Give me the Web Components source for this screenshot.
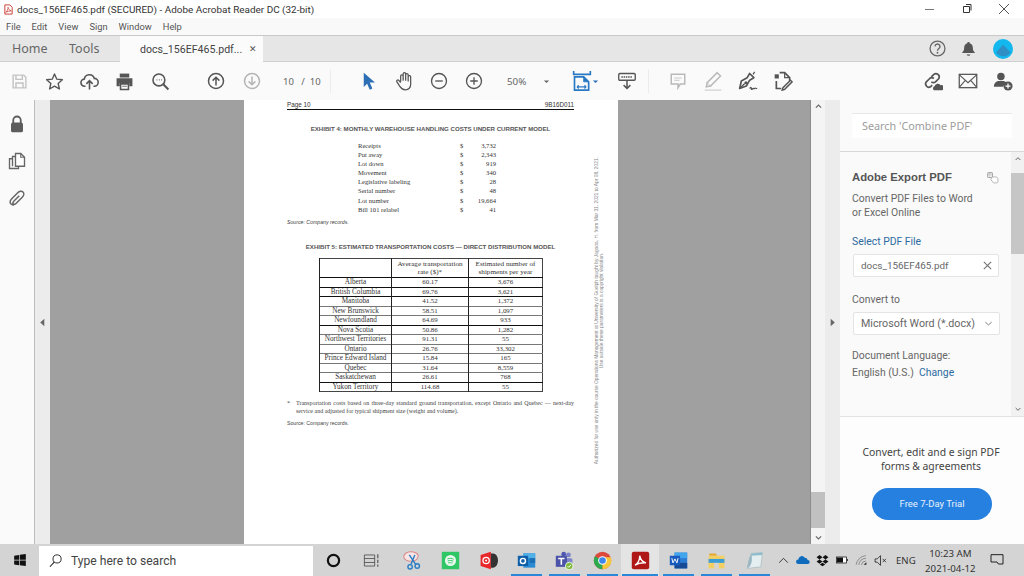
<!DOCTYPE html>
<html>
<head>
<meta charset="utf-8">
<title>docs_156EF465.pdf</title>
<style>
  html, body { margin: 0; height: 100%; overflow: hidden; background: #fff; }
  body { font-family: "Open Sans", "Noto Sans", sans-serif; }
  #app { display: flex; flex-direction: column; width: 1024px; height: 576px; }
  #main { display: flex; height: 444px; }
</style>
</head>
<body>
<div id="app">
  <title-bar></title-bar>
  <menu-bar></menu-bar>
  <tab-bar></tab-bar>
  <tool-bar></tool-bar>
  <div id="main">
    <left-rail></left-rail>
    <pdf-view></pdf-view>
    <tools-panel></tools-panel>
  </div>
  <task-bar></task-bar>
</div>

<script>
const ICONS = {
  pdfdoc: '<path d="M4 2h11l5 5v15H4z" fill="#fff" stroke="#c8352b" stroke-width="2"/><path d="M6 18c3-2 5-6 5-11 1 4 3 7 7 8-4 0-8 1-12 3z" fill="none" stroke="#c8352b" stroke-width="1.6"/>',
  save: '<path d="M3 3h15l3 3v15H3z" fill="none" stroke="#c4c4c4" stroke-width="2"/><path d="M7 3v6h9V3M7 21v-7h10v7" fill="none" stroke="#c4c4c4" stroke-width="2"/>',
  star: '<path d="M12 2.500l2.900 6.600 7.100.7-5.400 4.700 1.600 7L12 17.800l-6.200 3.700 1.600-7L2 9.800l7.100-.7z" fill="none" stroke="#555" stroke-width="1.700" stroke-linejoin="round"/>',
  cloud: '<path d="M7 18H6a4.500 4.500 0 0 1-.6-9A6.500 6.500 0 0 1 18 8a5 5 0 0 1 0 10h-1" fill="none" stroke="#555" stroke-width="2"/><path d="M12 22V11M8 15l4-4 4 4" fill="none" stroke="#555" stroke-width="2"/>',
  print: '<path d="M6 2h12v5H6z" fill="#555"/><path d="M2 8h20v10h-4v-4H6v4H2z" fill="#555"/><path d="M7 15h10v7H7z" fill="none" stroke="#555" stroke-width="2"/><path d="M9 18h6" stroke="#555"/>',
  find: '<circle cx="10" cy="10" r="7.500" fill="none" stroke="#555" stroke-width="2"/><path d="M15.500 15.500L22 22" stroke="#555" stroke-width="2.600"/><path d="M7 10h1M10 10h1M13 10h1" stroke="#555" stroke-width="1.400"/>',
  up: '<circle cx="12" cy="12" r="10" fill="none" stroke="#555" stroke-width="2"/><path d="M12 18V7M7.500 11.500L12 7l4.500 4.500" fill="none" stroke="#555" stroke-width="2"/>',
  down: '<circle cx="12" cy="12" r="10" fill="none" stroke="#b4b4b4" stroke-width="2"/><path d="M12 6v11M7.500 12.500L12 17l4.500-4.500" fill="none" stroke="#b4b4b4" stroke-width="2"/>',
  cursor: '<path d="M5 1l15 13h-7l3.500 8-3.500 1.500-3.500-8L5 20z" fill="#2d6fb5"/>',
  hand: '<path d="M8 13V6a1.500 1.500 0 0 1 3 0v5V3.500a1.500 1.500 0 0 1 3 0V11V4.500a1.500 1.500 0 0 1 3 0V12V7a1.500 1.500 0 0 1 3 0v9c0 4-2.500 6.500-6.500 6.500-3.500 0-5-1.500-6.500-4L3.500 13c-1-1.500 1-3 2.300-1.700L8 14" fill="none" stroke="#555" stroke-width="1.500" stroke-linejoin="round"/>',
  minus: '<circle cx="12" cy="12" r="10" fill="none" stroke="#555" stroke-width="1.800"/><path d="M7 12h10" stroke="#555" stroke-width="1.800"/>',
  plus: '<circle cx="12" cy="12" r="10" fill="none" stroke="#555" stroke-width="1.800"/><path d="M7 12h10M12 7v10" stroke="#555" stroke-width="1.800"/>',
  fit: '<path d="M2 0v4h20V0" fill="none" stroke="#2878c4" stroke-width="2"/><path d="M3 7h11l6 6v10H3z" fill="none" stroke="#2878c4" stroke-width="2"/><path d="M14 7v6h6z" fill="#2878c4" stroke="#2878c4"/><path d="M6 19h11M6 19l2-2M6 19l2 2M17 19l-2-2M17 19l-2 2" stroke="#2878c4" stroke-width="1.300"/>',
  keys: '<rect x="1" y="2" width="22" height="9" rx="1.500" fill="none" stroke="#555" stroke-width="1.800"/><path d="M4.500 6.500h15" stroke="#555" stroke-width="2" stroke-dasharray="2 1"/><path d="M12 11v11M7.500 17.500L12 22l4.500-4.500" fill="none" stroke="#555" stroke-width="2"/>',
  comment: '<path d="M3 3h18v13h-6l-3 5v-5H3z" fill="none" stroke="#b9b9b9" stroke-width="2"/><path d="M7 8h10M7 11h7" stroke="#c9c9c9" stroke-width="1.500"/>',
  marker: '<path d="M17 2l4 4L9 18l-5 1 1-5z" fill="none" stroke="#b9b9b9" stroke-width="1.800"/><path d="M2 23h20" stroke="#dcdcdc" stroke-width="2"/><path d="M5 14l5 5" stroke="#b9b9b9"/>',
  sign: '<path d="M2 21l2-9 7-4 3-5 5 5-5 3-4 7z" fill="none" stroke="#555" stroke-width="2" stroke-linejoin="round"/><circle cx="9.500" cy="14" r="1.800" fill="#555"/><path d="M2 21l6-6M20 1l-2 3" stroke="#555" stroke-width="1.500"/><path d="M14 21c1-2 2-2 2 0s1 1 2 0 1 1 2 0 1 0 3 0" fill="none" stroke="#555" stroke-width="1.500"/>',
  edit: '<path d="M2 4h5v5H2z" fill="#555"/><path d="M8 2h6l6 6v4" fill="none" stroke="#555" stroke-width="2"/><path d="M14 2v6h6" fill="none" stroke="#555" stroke-width="1.500"/><path d="M4 12v9h6" fill="none" stroke="#555" stroke-width="2"/><path d="M21 11l2 2-9 9-3 1 1-3z" fill="none" stroke="#555" stroke-width="1.700"/>',
  link: '<path d="M10 7l3-3a4 4 0 0 1 6 5l-4 4a4 4 0 0 1-5 0" fill="none" stroke="#555" stroke-width="2"/><path d="M13 9a4 4 0 0 0-5 0l-4 4a4 4 0 0 0 5 6l2-2" fill="none" stroke="#555" stroke-width="2"/><path d="M13 23a3 3 0 0 1 1-5 4 4 0 0 1 7-1 3 3 0 0 1 2 6z" fill="#555"/>',
  mail: '<rect x="1.500" y="4" width="21" height="16" fill="none" stroke="#555" stroke-width="1.500"/><path d="M2 5l10 9 10-9M2 19l7-8M22 19l-7-8" fill="none" stroke="#555" stroke-width="1.300"/>',
  adduser: '<circle cx="9.500" cy="6.500" r="4.500" fill="#555"/><path d="M1 19c0-4 2-6 5-7h7c2 .7 3 1.500 3.500 2.500A6 6 0 0 0 12 19z" fill="#555"/><circle cx="18" cy="18" r="5.500" fill="#555"/><path d="M15 18h6M18 15v6" stroke="#fff" stroke-width="1.500"/>',
  help: '<circle cx="12" cy="12" r="10.500" fill="none" stroke="#666" stroke-width="1.800"/><path d="M8.500 9a3.500 3.500 0 1 1 5.500 3c-1.500 1-2 1.500-2 3" fill="none" stroke="#666" stroke-width="2"/><circle cx="12" cy="18" r="1.300" fill="#666"/>',
  bell: '<path d="M12 1.500a2 2 0 0 1 2 2.200c3.500 1 5 4 5 8 0 3 1 5 3 6.300v1H2v-1c2-1.300 3-3.300 3-6.300 0-4 1.500-7 5-8a2 2 0 0 1 2-2.200z" fill="#555"/><path d="M9 21.500h6a3 2 0 0 1-6 0z" fill="#555"/>',
  avatar: '<circle cx="12" cy="12" r="12" fill="#12b7ee"/><path d="M4 16l8-9 3 3 6 6a10 10 0 0 1-17 0z" fill="#2f8fc4"/>',
  lock: '<path d="M7 11V7a5 5 0 0 1 10 0v4" fill="none" stroke="#5c5c5c" stroke-width="2.400"/><rect x="4" y="10" width="16" height="13" rx="2.500" fill="#5c5c5c"/>',
  copy: '<path d="M10 2h7l5 5v12H10z" fill="#fff" stroke="#666" stroke-width="1.800"/><path d="M17 2v5h5" fill="none" stroke="#666" stroke-width="1.500"/><path d="M10 6H6v13" fill="none" stroke="#666" stroke-width="1.800"/><path d="M6 9H2v13h12v-3" fill="none" stroke="#666" stroke-width="1.800"/>',
  clip: '<path d="M8 21c-3 1-6-2-5-5 .4-1 1-2 2-3l8-8c2-2 5-3 7-1s1 5-1 7l-8 8c-1 1-3 2-4 1s0-3 1-4l7-7" fill="none" stroke="#666" stroke-width="2"/>',
  exporthand: '<rect x="3" y="3" width="9" height="9" rx="2" fill="none" stroke="#aaa" stroke-width="2"/><path d="M3 7h9M7 3v9" stroke="#aaa"/><path d="M11 11h7c3 0 4 2 4 4v5c0 1-1 2-3 2h-5l-5-6z" fill="#fff" stroke="#aaa" stroke-width="1.600"/>',
  clear: '<path d="M4 4l16 16M20 4L4 20" stroke="#777" stroke-width="2.600"/>',
  chev: '<path d="M5 9l7 6 7-6" fill="none" stroke="#777" stroke-width="2"/>',
  chevup: '<path d="M5 15l7-7 7 7" fill="none" stroke="#666" stroke-width="3"/>',
  chevdown: '<path d="M5 9l7 7 7-7" fill="none" stroke="#666" stroke-width="3"/>',
  caret: '<path d="M5 9h14l-7 7z" fill="#666"/>',
  caretblue: '<path d="M5 9h14l-7 7z" fill="#2d6fb5"/>',
  left: '<path d="M16 4v16L7 12z" fill="#666"/>',
  right: '<path d="M8 4v16l9-8z" fill="#666"/>',
  win: '<path d="M2 4.500l8.500-1.200V11.500H2zM11.700 3.100L22 1.700V11.500H11.700zM2 12.700h8.500v8.100L2 19.600zM11.700 12.700H22v9.600l-10.300-1.400z" fill="#111"/>',
  lens: '<circle cx="14.500" cy="9.500" r="6.500" fill="none" stroke="#222" stroke-width="1.500"/><path d="M10 14.500L3 22" stroke="#222" stroke-width="1.700"/>',
  cortana: '<circle cx="12" cy="12" r="9" fill="none" stroke="#111" stroke-width="3.500"/>',
  taskview: '<path d="M3 5h13v14H3zM3 9.500h13M3 14.500h13" fill="none" stroke="#444" stroke-width="1"/><path d="M20 4v5M20 11v4M20 17v3" stroke="#444" stroke-width="1.300"/>',
  snip: '<path d="M1 7c0-4 5-6 9-6s10 2 9 6-5 6-9 6-9-2-9-6z" fill="#f7e4e4" stroke="#d98a8a" stroke-width="1.300"/><path d="M8 5l8 12M15 5L10 17" stroke="#2a7fc4" stroke-width="1.800"/><circle cx="9" cy="20" r="2.800" fill="none" stroke="#2a7fc4" stroke-width="1.800"/><circle cx="18" cy="19" r="2.800" fill="none" stroke="#2a7fc4" stroke-width="1.800"/>',
  spotify: '<rect x="1" y="1" width="22" height="22" fill="#2fc765"/><circle cx="12" cy="12" r="7" fill="#e8f8ee"/><path d="M8 10c3-1 6-1 8 .5M8.500 12.500c2.500-.7 5-.7 7 .4M9 15c2-.5 4-.4 5.500.4" fill="none" stroke="#2fc765" stroke-width="1.200"/>',
  redapp: '<path d="M2 5l13-4v22L2 19z" fill="#e8262a"/><path d="M15 3h3a6 9 0 0 1 0 18h-3z" fill="#333"/><circle cx="9" cy="12" r="4" fill="none" stroke="#fff" stroke-width="1.600"/><circle cx="9" cy="12" r="1.300" fill="#fff"/>',
  outlook: '<rect x="8" y="3" width="15" height="18" fill="#2a8ad4"/><path d="M8 3h15v6H8z" fill="#50b0e8"/><path d="M16 9h7v6h-7z" fill="#1b6fb5"/><rect x="1" y="6" width="13" height="13" fill="#0f5fa8"/><circle cx="7.500" cy="12.500" r="3.200" fill="none" stroke="#fff" stroke-width="1.800"/>',
  teams: '<circle cx="17" cy="5" r="3" fill="#7b83c9"/><rect x="13" y="9" width="9" height="10" rx="2" fill="#7b83c9"/><circle cx="11" cy="4" r="3" fill="#5059b0"/><rect x="1" y="6" width="14" height="14" fill="#4b53a8"/><path d="M4 9.500h8M8 9.500v8" stroke="#fff" stroke-width="2"/><circle cx="18" cy="19" r="4.800" fill="#7fba3c" stroke="#fff"/><path d="M15.800 19l1.600 1.600 2.800-3" fill="none" stroke="#fff" stroke-width="1.200"/>',
  chrome: '<circle cx="12" cy="12" r="11" fill="#dd4a3c"/><path d="M12 12L2.500 6.500A11 11 0 0 0 12 23z" fill="#2da94f"/><path d="M12 12v11A11 11 0 0 0 22.500 8H12z" fill="#f7c93a"/><circle cx="12" cy="12" r="5.500" fill="#fff"/><circle cx="12" cy="12" r="4.200" fill="#3f86ea"/>',
  acrobat: '<rect x="1" y="1" width="22" height="22" rx="2.500" fill="#b01818"/><path d="M5 18c4-2.500 6-7 6-12 1 5 3 8 8 9-5-.5-10 .5-14 3z" fill="none" stroke="#fff" stroke-width="1.700"/>',
  word: '<rect x="7" y="2" width="16" height="20" fill="#2b7cd3"/><path d="M7 2h16v7H7z" fill="#41a5ee"/><path d="M7 15h16v7H7z" fill="#174a94"/><rect x="1" y="6" width="13" height="12" fill="#185abd"/><path d="M3.500 9l1.500 6 2.500-5 2.500 5 1.500-6" fill="none" stroke="#fff" stroke-width="1.200"/>',
  folder: '<path d="M3 3h8l2 3H3z" fill="#e5a92c"/><path d="M2 6h20v16H2z" fill="#f4cf62"/><path d="M2 10h20v5H2z" fill="#3b9ed8"/><path d="M9 15h6v7H9z" fill="#d4d4d4"/>',
  notes: '<path d="M8 3l14-1-2 18-17 2z" fill="#e4edf0" stroke="#a2b6bb" stroke-width=".8"/><path d="M8 3l14-1-.5 3-13.500 1z" fill="#8fbccb"/><path d="M3 22c5-3 7-10 5-19-3 5-5 12-5 19z" fill="#9bb8c2"/>',
  trayup: '<path d="M4 16l8-8 8 8" fill="none" stroke="#222" stroke-width="1.600"/>',
  onedrive: '<path d="M4 19a4 4 0 0 1 0-8 6 6 0 0 1 11-3 5 5 0 0 1 5 4 3.500 3.500 0 0 1 0 7z" fill="#0f6cbd"/>',
  dropbox: '<path d="M6.500 2L12 6 6.500 10 1 6zM17.500 2L23 6l-5.500 4L12 6zM6.500 10L12 14l-5.500 4L1 14zM17.500 10L23 14l-5.500 4L12 14zM7 19.500l5-3.500 5 3.500-5 3z" fill="#111"/>',
  battery: '<rect x="1" y="6" width="20" height="12" fill="#fff" stroke="#111" stroke-width="1.500"/><rect x="2" y="7" width="12" height="10" fill="#111"/><path d="M22 10h1.500v4H22" fill="#111"/>',
  wifi: '<path d="M2 20A20 20 0 0 1 20 3M7 20A14 14 0 0 1 20 8M12 20a8 8 0 0 1 8-7" fill="none" stroke="#666" stroke-width="1.200"/><path d="M16 20l5-5v5z" fill="#222"/>',
  mute: '<path d="M2 9h4l6-6v18l-6-6H2z" fill="none" stroke="#222" stroke-width="1.500"/><path d="M16 9l6 6M22 9l-6 6" stroke="#222" stroke-width="1.500"/>',
  notify: '<path d="M3 4h18v14h-7l-2-3H3z" fill="none" stroke="#222" stroke-width="1.500"/>'
};

// small helper, every class below stamps its shadow root with this
function shadow(el, html) {
  el.attachShadow({ mode: 'open' }).innerHTML = html;
}

class UiIcon extends HTMLElement {
  connectedCallback() {
    const s = this.getAttribute('size') || 20;
    shadow(this, `
      <style>:host { display: inline-flex; flex: none; width: ${s}px; height: ${s}px; } svg { width: 100%; height: 100%; display: block; }</style>
      <svg viewBox="0 0 24 24">${ICONS[this.getAttribute('name')] || ''}</svg>`);
  }
}
customElements.define('ui-icon', UiIcon);

class TitleBar extends HTMLElement {
  connectedCallback() {
    shadow(this, `
      <style>
        :host { display: flex; align-items: center; height: 18px; background: #fff; color: #333; font: 9.950px Roboto, sans-serif; }
        ui-icon { margin: 0 3px 0 3px; }
        span { flex: 1; white-space: nowrap; }
        .btn { flex: none; width: 36px; height: 18px; display: flex; align-items: center; justify-content: center; }
        svg { width: 12px; height: 12px; display: block; }
      </style>
      <ui-icon name="pdfdoc" size="11"></ui-icon>
      <span>docs_156EF465.pdf (SECURED) - Adobe Acrobat Reader DC (32-bit)</span>
      <div class="btn" style="margin-right:1px"><svg viewBox="0 0 12 12"><path d="M1 6.500h9" stroke="#777"/></svg></div>
      <div class="btn"><svg viewBox="0 0 12 12"><path d="M2.500 3.500h6v6h-6zM5 1.500h5v6" fill="none" stroke="#333"/></svg></div>
      <div class="btn" style="margin-left:1px;margin-right:2px"><svg viewBox="0 0 12 12"><path d="M1 1l10 10M11 1L1 11" stroke="#555"/></svg></div>`);
  }
}
customElements.define('title-bar', TitleBar);

class MenuBar extends HTMLElement {
  connectedCallback() {
    shadow(this, `
      <style>
        :host { display: flex; align-items: center; gap: 11px; height: 17px; padding-left: 6px; background: #f9f9f9; color: #555; font: 9.300px Roboto, sans-serif; border-bottom: 1px solid #c9c9c9; }
      </style>
      <span>File</span><span>Edit</span><span>View</span><span>Sign</span><span>Window</span><span>Help</span>`);
  }
}
customElements.define('menu-bar', MenuBar);

class TabBar extends HTMLElement {
  connectedCallback() {
    shadow(this, `
      <style>
        :host { display: flex; align-items: center; height: 27px; background: #e6e6e6; color: #666; font: 12.500px "Noto Sans", sans-serif; border-bottom: 1px solid #cfcfcf; box-sizing: border-box; }
        .home { flex: none; width: 57px; margin-left: 12px; }
        .tools { flex: none; width: 51px; }
        .tab { align-self: stretch; margin-bottom: -1px; width: 143px; box-sizing: border-box; padding-left: 20px; display: flex; align-items: center; background: #fbfbfb; font: 10.600px Roboto, sans-serif; color: #444; }
        .tab b { font-weight: 400; font-size: 9px; margin-left: 7px; color: #555; }
        .fill { flex: 1; }
      </style>
      <span class="home">Home</span><span class="tools">Tools</span>
      <div class="tab">docs_156EF465.pdf...<b>&#10005;</b></div>
      <div class="fill"></div>
      <ui-icon name="help" size="17" style="margin-right:15px"></ui-icon>
      <ui-icon name="bell" size="15" style="margin-right:17px"></ui-icon>
      <ui-icon name="avatar" size="20" style="margin-right:11px"></ui-icon>`);
  }
}
customElements.define('tab-bar', TabBar);

class ToolBar extends HTMLElement {
  connectedCallback() {
    const slot = (name, ml, size) => `<div class="i" style="margin-left:${ml}px"><ui-icon name="${name}" size="${size || 19}"></ui-icon></div>`;
    shadow(this, `
      <style>
        :host { display: flex; align-items: center; height: 38px; background: #fafafa; color: #666; font: 9.500px "Noto Sans", sans-serif; }
        .i { flex: none; width: 35px; display: flex; justify-content: center; }
        .pg { flex: none; white-space: pre; }
        .sep { flex: none; width: 1px; height: 24px; background: #ececec; }
        .fill { flex: 1; }
      </style>
      ${slot('save', 2, 17)}${slot('star', 0)}${slot('cloud', 0)}${slot('print', 0)}${slot('find', 1)}
      ${slot('up', 20, 18)}${slot('down', 1, 18)}
      <span class="pg" style="margin-left:14px;width:47px">10   /  10</span>
      <div class="sep" style="margin-left:0"></div>
      ${slot('cursor', 20, 18)}${slot('hand', 0, 20)}${slot('minus', 0, 18)}${slot('plus', 0, 18)}
      <span class="pg" style="margin-left:16px;width:27px;font-size:9.800px">50%</span>
      <ui-icon name="caret" size="9" style="margin-left:8px"></ui-icon>
      <ui-icon name="fit" size="20" style="margin-left:21px"></ui-icon>
      <ui-icon name="caretblue" size="9" style="margin-left:-1px"></ui-icon>
      ${slot('keys', 9, 18)}
      <div class="sep" style="margin-left:4px"></div>
      ${slot('comment', 11, 18)}${slot('marker', 0, 20)}${slot('sign', 0, 20)}${slot('edit', 0, 20)}
      <div class="fill"></div>
      ${slot('link', 0, 20)}${slot('mail', 0, 20)}${slot('adduser', 0, 20)}
      <div style="width:4px"></div>`);
  }
}
customElements.define('tool-bar', ToolBar);

class LeftRail extends HTMLElement {
  connectedCallback() {
    shadow(this, `
      <style>
        :host { display: flex; flex: none; flex-direction: column; align-items: center; gap: 19px; width: 35px; box-sizing: border-box; padding: 15px 0 0 0; background: #fafafa; border-right: 1px solid #bdbdbd; }
      </style>
      <ui-icon name="lock" size="18"></ui-icon>
      <ui-icon name="copy" size="18"></ui-icon>
      <ui-icon name="clip" size="18"></ui-icon>`);
  }
}
customElements.define('left-rail', LeftRail);

class PdfRow extends HTMLElement {
  connectedCallback() {
    const [label, value] = [this.getAttribute('label'), this.getAttribute('value')];
    shadow(this, `
      <style>
        :host { display: grid; grid-template-columns: 102px 12px 24px; height: 9.100px; line-height: 9.100px; font-size: 6.600px; }
        b { font-weight: 400; text-align: right; }
      </style>
      <span>${label}</span><span>$</span><b>${value}</b>`);
  }
}
customElements.define('pdf-row', PdfRow);

class PdfPage extends HTMLElement {
  connectedCallback() {
    const rows = [
      ['Alberta', '60.17', '3,676', 1],
      ['British Columbia', '69.76', '3,621', 1],
      ['Manitoba', '41.52', '1,372', 0],
      ['New Brunswick', '58.51', '1,097', 0],
      ['Newfoundland', '64.69', '933', 1],
      ['Nova Scotia', '50.86', '1,282', 0],
      ['Northwest Territories', '91.31', '55', 0],
      ['Ontario', '26.76', '33,302', 0],
      ['Prince Edward Island', '15.84', '165', 0],
      ['Quebec', '31.64', '8,559', 0],
      ['Saskatchewan', '26.61', '768', 1],
      ['Yukon Territory', '114.68', '55', 0]
    ].map(r => `<tr class="${r[3] ? 'd' : ''}"><td class="name">${r[0]}</td><td>${r[1]}</td><td>${r[2]}</td></tr>`).join('');
    shadow(this, `
      <style>
        :host { display: block; position: relative; flex: none; width: 374px; height: 444px; box-sizing: border-box; padding: 0 44px 0 43px; background: #fff; color: #333; font: 6.400px "Liberation Serif", serif; overflow: hidden; }
        .head { display: flex; justify-content: space-between; font: 6.300px "Liberation Sans", sans-serif; height: 9px; line-height: 9px; border-bottom: 1.500px solid #111; }
        h4 { margin: 0; text-align: center; font: 700 6.120px/7px "Liberation Sans", sans-serif; height: 7px; color: #555; white-space: nowrap; }
        .ex4 { margin-top: 15px; }
        .list { margin: 9px 0 0 71px; width: 138px; }
        .src { font: italic 5.200px "Liberation Sans", sans-serif; margin-top: 5.500px; height: 7px; line-height: 7px; color: #444; }
        .ex5 { margin-top: 17px; }
        table { border-collapse: collapse; margin: 8px 0 0 32px; width: 223px; table-layout: fixed; border: 1px solid #444; }
        td { padding: 0; border-left: 1px solid #222; border-top: 1px solid #777; text-align: center; height: 8.500px; line-height: 8.500px; white-space: nowrap; font-size: 6.900px; }
        td.name { font-size: 7.200px; }
        tr.d + tr td { border-top-color: #111; }
        tr.hd td { height: 18px; line-height: 8.200px; border-top: 0; font-size: 7.150px; }
        tr.hd + tr td { border-top-color: #111; }
        .note { display: flex; margin-top: 7px; font-size: 6px; line-height: 8px; color: #444; }
        .note i { font-style: normal; width: 9px; flex: none; }
        .note p { margin: 0; flex: 1; }
        .note .l1 { display: block; white-space: nowrap; text-align: justify; text-align-last: justify; overflow: hidden; }
        .foot { margin-top: 5px; font: 5.200px/7px "Liberation Sans", sans-serif; color: #444; }
        .side { position: absolute; writing-mode: vertical-rl; transform: rotate(180deg); font: 4.870px/5px "Liberation Sans", sans-serif; color: #888; white-space: nowrap; text-align: center; left: 350px; top: 57px; }
      </style>
      <div class="head"><span>Page 10</span><span>9B16D011</span></div>
      <h4 class="ex4">EXHIBIT 4: MONTHLY WAREHOUSE HANDLING COSTS UNDER CURRENT MODEL</h4>
      <div class="list">
        <pdf-row label="Receipts" value="3,732"></pdf-row>
        <pdf-row label="Put away" value="2,343"></pdf-row>
        <pdf-row label="Lot down" value="919"></pdf-row>
        <pdf-row label="Movement" value="340"></pdf-row>
        <pdf-row label="Legislative labeling" value="28"></pdf-row>
        <pdf-row label="Serial number" value="48"></pdf-row>
        <pdf-row label="Lot number" value="19,664"></pdf-row>
        <pdf-row label="Bill 101 relabel" value="41"></pdf-row>
      </div>
      <div class="src">Source: Company records.</div>
      <h4 class="ex5">EXHIBIT 5: ESTIMATED TRANSPORTATION COSTS &mdash; DIRECT DISTRIBUTION MODEL</h4>
      <table>
        <colgroup><col style="width:72px"><col style="width:77px"><col style="width:74px"></colgroup>
        <tr class="hd"><td></td><td>Average transportation<br>rate ($)*</td><td>Estimated number of<br>shipments per year</td></tr>
        ${rows}
      </table>
      <div class="note"><i>*</i><p><span class="l1">Transportation costs based on three-day standard ground transportation, except Ontario and Quebec &mdash; next-day</span>service and adjusted for typical shipment size (weight and volume).</p></div>
      <div class="foot">Source: Company records.</div>
      <div class="side">Authorized for use only in the course Operations Management at University of Guelph taught by Jagoda, H. from Mar 31, 2021 to Apr 08, 2021.<br>Use outside these parameters is a copyright violation.</div>`);
  }
}
customElements.define('pdf-page', PdfPage);

class PdfView extends HTMLElement {
  connectedCallback() {
    shadow(this, `
      <style>
        :host { display: flex; flex: none; width: 805px; height: 444px; }
        .strip { flex: none; width: 15px; display: flex; align-items: center; justify-content: center; background: #ececec; }
        .canvas { flex: none; width: 760px; display: flex; background: #a0a0a0; }
        .g1 { flex: none; width: 194px; }
        .g2 { flex: 1; }
        .bar { flex: none; width: 15px; box-sizing: border-box; border-left: 1px solid #8c8c8c; background: #f4f4f4; display: flex; flex-direction: column; align-items: center; justify-content: space-between; padding: 2px 0; position: relative; }
        .thumb { position: absolute; left: 0; right: 0; top: 392px; height: 36px; background: #c0c0c0; }
        .strip2 { flex: none; width: 15px; display: flex; align-items: center; justify-content: center; background: #ececec; }
      </style>
      <div class="strip"><ui-icon name="left" size="11"></ui-icon></div>
      <div class="canvas"><div class="g1"></div><pdf-page></pdf-page><div class="g2"></div></div>
      <div class="bar"><ui-icon name="chevup" size="9"></ui-icon><div class="thumb"></div><ui-icon name="chevdown" size="9"></ui-icon></div>
      <div class="strip2"><ui-icon name="right" size="11"></ui-icon></div>`);
  }
}
customElements.define('pdf-view', PdfView);

class ToolsPanel extends HTMLElement {
  connectedCallback() {
    shadow(this, `
      <style>
        :host { display: flex; flex-direction: column; flex: 1; min-width: 0; background: #fafafa; color: #666; font: 10.400px Roboto, sans-serif; }
        .search { flex: none; height: 52px; box-sizing: border-box; padding: 13px 12px 14px 12px; border-bottom: 1px solid #d8d8d8; }
        .search div { height: 25px; box-sizing: border-box; padding-left: 10px; background: #fff; border-top: 1px solid #e8e8e8; color: #9c9c9c; font: 10.800px/24px "Noto Sans", sans-serif; }
        .mid { flex: none; height: 265px; display: flex; border-bottom: 1px solid #e2e2e2; box-sizing: border-box; }
        .form { flex: none; width: 171px; box-sizing: border-box; padding: 18px 0 0 12px; }
        .sb { flex: 1; background: #f1f1f1; display: flex; flex-direction: column; align-items: center; justify-content: space-between; padding: 3px 0; position: relative; }
        .sb i { position: absolute; left: 0; right: 0; top: 21px; height: 81px; background: #c6c6c6; }
        h3 { margin: 0; display: flex; justify-content: space-between; align-items: center; width: 147px; font: 700 11.300px/14px "Liberation Sans", sans-serif; color: #555; }
        p { margin: 8px 0 0; line-height: 14px; }
        .lbl { margin-top: 15px; line-height: 14px; }
        .lbl.next { margin-top: 16px; }
        .blue { color: #2d6a9f; }
        .field { display: flex; align-items: center; justify-content: space-between; width: 146px; height: 23px; box-sizing: border-box; padding: 0 5px 0 7px; margin: 5px 0 0 1px; background: #fff; border: 1px solid #e4e4e4; border-radius: 2px; font-size: 10.700px; }
        .fname { font-size: 9.900px; }
        .lang { margin-top: 12px; line-height: 17px; }
        .promo { flex: 1; display: flex; flex-direction: column; align-items: center; padding: 28px 2px 0 0; background: #fdfdfd; color: #444; font: 10.350px/14px "Noto Sans", sans-serif; text-align: center; }
        .cta { margin: 15px 0 0 2px; width: 120px; height: 32px; border-radius: 16px; background: #2680e0; color: #e8f2fc; font: 9.500px/32px Roboto, sans-serif; }
      </style>
      <div class="search"><div>Search 'Combine PDF'</div></div>
      <div class="mid">
        <div class="form">
          <h3>Adobe Export PDF <ui-icon name="exporthand" size="13"></ui-icon></h3>
          <p>Convert PDF Files to Word<br>or Excel Online</p>
          <div class="lbl blue">Select PDF File</div>
          <div class="field"><span class="fname">docs_156EF465.pdf</span><ui-icon name="clear" size="11"></ui-icon></div>
          <div class="lbl next">Convert to</div>
          <div class="field" style="width:147px"><span>Microsoft Word (*.docx)</span><ui-icon name="chev" size="11"></ui-icon></div>
          <div class="lang">Document Language:<br>English (U.S.) &nbsp;<span class="blue">Change</span></div>
        </div>
        <div class="sb"><ui-icon name="chevup" size="8"></ui-icon><i></i><ui-icon name="chevdown" size="8"></ui-icon></div>
      </div>
      <div class="promo">
        <div>Convert, edit and e sign PDF<br>forms &amp; agreements</div>
        <div class="cta">Free 7-Day Trial</div>
      </div>`);
  }
}
customElements.define('tools-panel', ToolsPanel);

class TaskBar extends HTMLElement {
  connectedCallback() {
    const app = (name, pin, ml, on) => `<div class="a${pin ? ' p' : ''}${on ? ' on' : ''}" style="margin-left:${ml || 0}px"><ui-icon name="${name}" size="${name === 'cortana' ? 15 : 19}"></ui-icon></div>`;
    shadow(this, `
      <style>
        :host { display: flex; align-items: center; height: 32px; background: #d4d4d4; color: #333; font: 9.700px "Noto Sans", sans-serif; }
        .start { flex: none; width: 39px; height: 32px; display: flex; align-items: center; justify-content: center; }
        .box { flex: none; width: 274px; height: 30px; margin-top: 1px; box-sizing: border-box; display: flex; align-items: center; gap: 8px; padding-left: 9px; background: #fff; font: 12.100px Roboto, sans-serif; color: #444; }
        .a { flex: none; width: 38px; height: 32px; box-sizing: border-box; display: flex; align-items: center; justify-content: center; }
        .p { background: linear-gradient(#2b88d8, #2b88d8) center bottom / 31px 2px no-repeat; }
        .on { background: linear-gradient(#2b88d8, #2b88d8) center bottom / 36px 2px no-repeat, #e4e4e4; }
        .tray { flex: none; display: flex; align-items: center; justify-content: center; width: 19.400px; }
        .eng { flex: none; width: 31px; text-align: center; font-size: 9.600px; }
        .clock { flex: none; width: 58px; text-align: center; line-height: 15px; padding-top: 1px; }
      </style>
      <div class="start"><ui-icon name="win" size="14"></ui-icon></div>
      <div class="box"><ui-icon name="lens" size="15"></ui-icon><span>Type here to search</span></div>
      ${app('cortana', 0, 1)}${app('taskview')}${app('snip', 0, 3)}${app('spotify')}${app('redapp')}
      ${app('outlook', 1)}${app('teams', 1)}${app('chrome', 1)}${app('acrobat', 1, 0, 1)}${app('word', 1)}${app('folder', 1)}${app('notes', 1)}
      <div class="tray" style="margin-left:1px"><ui-icon name="trayup" size="13"></ui-icon></div>
      <div class="tray"><ui-icon name="onedrive" size="14"></ui-icon></div>
      <div class="tray"><ui-icon name="dropbox" size="13"></ui-icon></div>
      <div class="tray"><ui-icon name="battery" size="12"></ui-icon></div>
      <div class="tray"><ui-icon name="wifi" size="13"></ui-icon></div>
      <div class="tray"><ui-icon name="mute" size="13"></ui-icon></div>
      <div class="eng">ENG</div>
      <div class="clock">10:23 AM<br>2021-04-12</div>
      <div class="tray" style="margin-left:8px"><ui-icon name="notify" size="16"></ui-icon></div>`);
  }
}
customElements.define('task-bar', TaskBar);
</script>
</body>
</html>
